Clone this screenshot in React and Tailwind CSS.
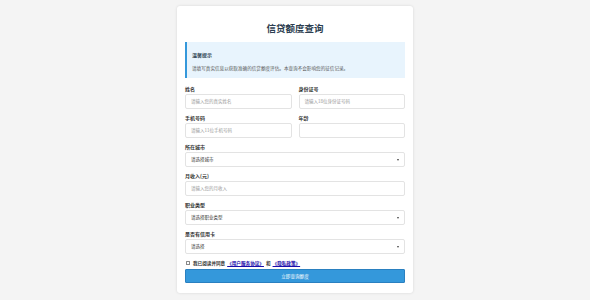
import React from 'react';

const font = { fontFamily: '"Noto Sans CJK SC", "Noto Sans", sans-serif' };

const Label = ({ children }) => (
  <div className="text-[5px] leading-[6px] font-bold text-[#333] mb-[2px]">{children}</div>
);

const TextField = ({ placeholder }) => (
  <div className="h-[15px] border border-[#e3e3e3] rounded-[2px] bg-white flex items-center px-[5px] text-[4.5px] text-[#999]">
    {placeholder}
  </div>
);

const SelectField = ({ value }) => (
  <div className="h-[15px] border border-[#e3e3e3] rounded-[2px] bg-white flex items-center justify-between px-[5px] text-[4.5px] text-[#333]">
    <span>{value}</span>
    <span className="w-0 h-0 border-l-[1.5px] border-r-[1.5px] border-t-[2px] border-l-transparent border-r-transparent border-t-[#444]" />
  </div>
);

const Field = ({ label, children }) => (
  <div className="mb-[6px]">
    <Label>{label}</Label>
    {children}
  </div>
);

export default function App() {
  return (
    <div className="min-h-[300px] bg-[#f4f4f4] flex justify-center pt-[6px]" style={font}>
      <div className="w-[236px] h-[287px] bg-white rounded-[3px] shadow-[0_0_3px_rgba(0,0,0,0.12)] px-[8px] pt-[16px]">
        <h1 className="text-center text-[9.5px] leading-[12px] font-bold text-[#2c3e50] mb-[8px]">信贷额度查询</h1>

        <div className="h-[36px] bg-[#e8f4fd] border-l-[2px] border-[#3498db] px-[5px] pt-[2px] flex flex-col justify-center gap-[7px] mb-[8px]">
          <div className="text-[5px] leading-[6px] font-bold text-[#2c3e50]">温馨提示</div>
          <div className="text-[4.6px] leading-[6px] text-[#555]">请填写真实信息以获取准确的信贷额度评估。本查询不会影响您的征信记录。</div>
        </div>

        <div className="grid grid-cols-2 gap-x-[7px]">
          <Field label="姓名"><TextField placeholder="请输入您的真实姓名" /></Field>
          <Field label="身份证号"><TextField placeholder="请输入18位身份证号码" /></Field>
          <Field label="手机号码"><TextField placeholder="请输入11位手机号码" /></Field>
          <Field label="年龄"><TextField placeholder="" /></Field>
        </div>

        <Field label="所在城市"><SelectField value="请选择城市" /></Field>
        <Field label="月收入(元)"><TextField placeholder="请输入您的月收入" /></Field>
        <Field label="职业类型"><SelectField value="请选择职业类型" /></Field>
        <Field label="是否有信用卡"><SelectField value="请选择" /></Field>

        <div className="flex items-center gap-[2px] text-[4.6px] leading-[6px] text-[#333] mt-[2px] mb-[3px] pl-[1px]">
          <span className="w-[4px] h-[4px] border-[0.5px] border-[#888] rounded-[0.5px] bg-white" />
          <span className="font-bold ml-[1px]">我已阅读并同意</span>
          <span className="text-[#1a0dab] underline font-bold">《用户服务协议》</span>
          <span className="font-bold">和</span>
          <span className="text-[#1a0dab] underline font-bold">《隐私政策》</span>
        </div>

        <div className="h-[14px] bg-[#3498db] border border-[#2a80c0] rounded-[1px] flex items-center justify-center text-[4.6px] text-white">
          立即查询额度
        </div>
      </div>
    </div>
  );
}
